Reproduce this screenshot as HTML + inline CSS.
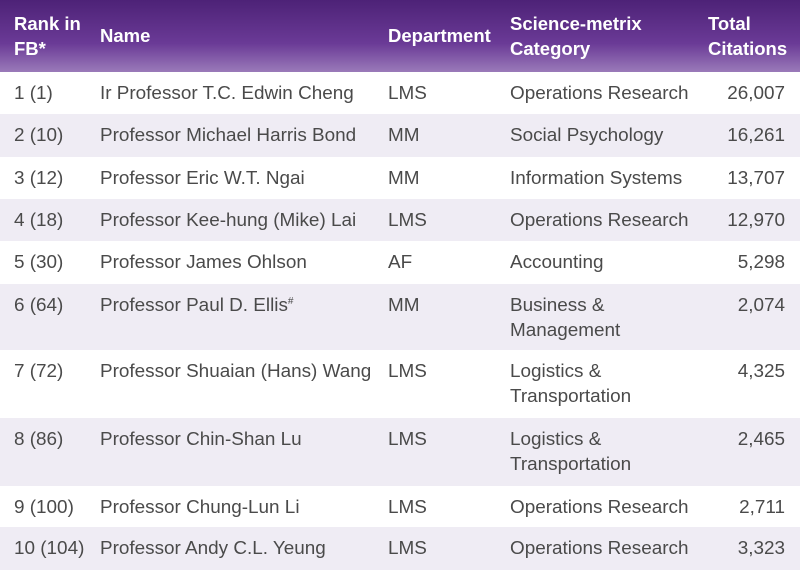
<!DOCTYPE html>
<html><head><style>
*{margin:0;padding:0;box-sizing:border-box}
body{width:800px;height:570px;overflow:hidden;background:#fff;font-family:"Liberation Sans",Arial,sans-serif;color:#4a4a4a;font-size:18.9px}
.h{position:absolute;left:0;top:0;width:800px;height:72px;background:linear-gradient(#4d2277,#6a3a96 60%,#9a7ab9);color:#fff;font-weight:bold;font-size:18.5px}
.h div,.r div{position:absolute;line-height:25px;white-space:nowrap}
.r{position:absolute;left:0;width:800px}
.s{background:#efecf4}
.c1{left:14px}.c2{left:100px}.c3{left:388px}.c4{left:510px}.c5{right:15px;text-align:right}
.h .c5{left:708px;right:auto;text-align:left}
.r div{top:9px}
sup{font-size:10px;line-height:0;vertical-align:7px}
</style></head><body>
<div class="h">
<div class="c1" style="top:11px">Rank in<br>FB*</div>
<div class="c2" style="top:23px">Name</div>
<div class="c3" style="top:23px">Department</div>
<div class="c4" style="top:11px">Science-metrix<br>Category</div>
<div class="c5" style="top:11px">Total<br>Citations</div>
</div>
<div class="r" style="top:72px;height:42px"><div class="c1">1 (1)</div><div class="c2">Ir Professor T.C. Edwin Cheng</div><div class="c3">LMS</div><div class="c4">Operations Research</div><div class="c5">26,007</div></div>
<div class="r s" style="top:114px;height:43px"><div class="c1">2 (10)</div><div class="c2">Professor Michael Harris Bond</div><div class="c3">MM</div><div class="c4">Social Psychology</div><div class="c5">16,261</div></div>
<div class="r" style="top:157px;height:42px"><div class="c1">3 (12)</div><div class="c2">Professor Eric W.T. Ngai</div><div class="c3">MM</div><div class="c4">Information Systems</div><div class="c5">13,707</div></div>
<div class="r s" style="top:199px;height:42px"><div class="c1">4 (18)</div><div class="c2">Professor Kee-hung (Mike) Lai</div><div class="c3">LMS</div><div class="c4">Operations Research</div><div class="c5">12,970</div></div>
<div class="r" style="top:241px;height:43px"><div class="c1">5 (30)</div><div class="c2">Professor James Ohlson</div><div class="c3">AF</div><div class="c4">Accounting</div><div class="c5">5,298</div></div>
<div class="r s" style="top:284px;height:66px"><div class="c1">6 (64)</div><div class="c2">Professor Paul D. Ellis<sup>#</sup></div><div class="c3">MM</div><div class="c4">Business &amp;<br>Management</div><div class="c5">2,074</div></div>
<div class="r" style="top:350px;height:68px"><div class="c1">7 (72)</div><div class="c2">Professor Shuaian (Hans) Wang</div><div class="c3">LMS</div><div class="c4">Logistics &amp;<br>Transportation</div><div class="c5">4,325</div></div>
<div class="r s" style="top:418px;height:68px"><div class="c1">8 (86)</div><div class="c2">Professor Chin-Shan Lu</div><div class="c3">LMS</div><div class="c4">Logistics &amp;<br>Transportation</div><div class="c5">2,465</div></div>
<div class="r" style="top:486px;height:41px"><div class="c1">9 (100)</div><div class="c2">Professor Chung-Lun Li</div><div class="c3">LMS</div><div class="c4">Operations Research</div><div class="c5">2,711</div></div>
<div class="r s" style="top:527px;height:43px"><div class="c1">10 (104)</div><div class="c2">Professor Andy C.L. Yeung</div><div class="c3">LMS</div><div class="c4">Operations Research</div><div class="c5">3,323</div></div>
</body></html>
